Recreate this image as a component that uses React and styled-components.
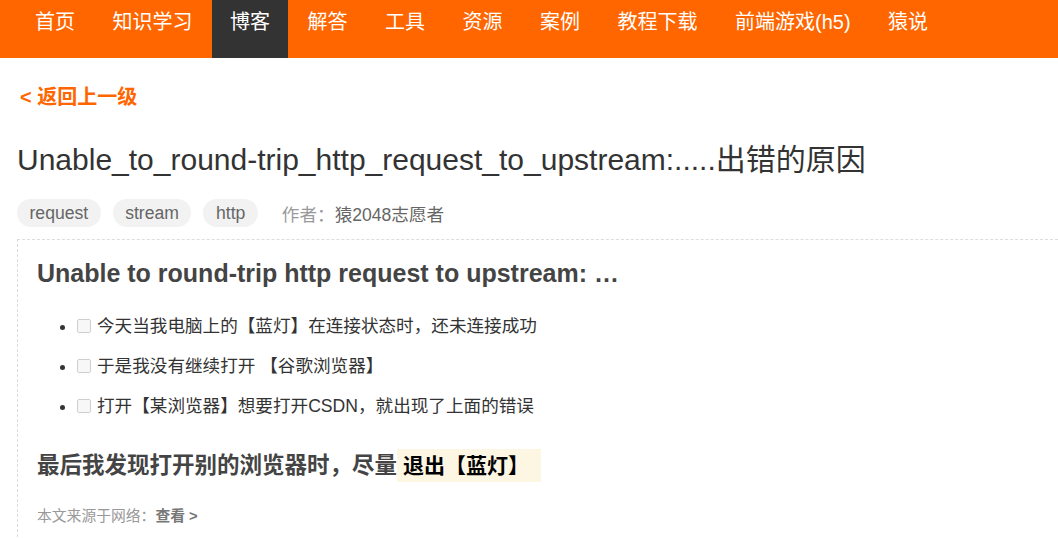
import React from 'react'
import styled, { createGlobalStyle } from 'styled-components'

const GlobalStyle = createGlobalStyle`
  body {
    margin: 0;
    background: #fff;
    overflow-x: hidden;
    font-family: "Liberation Sans", Arial, "Noto Sans CJK SC", sans-serif;
  }
`

const NAV_ITEMS = ['首页', '知识学习', '博客', '解答', '工具', '资源', '案例', '教程下载', '前端游戏(h5)', '猿说']

const TAGS = ['request', 'stream', 'http']

const ITEMS = [
  '今天当我电脑上的【蓝灯】在连接状态时，还未连接成功',
  '于是我没有继续打开 【谷歌浏览器】',
  '打开【某浏览器】想要打开CSDN，就出现了上面的错误',
]

const Nav = styled.nav`
  display: flex;
  height: 58px;
  padding-left: 17px;
  gap: 1.5px;
  background: #ff6600;
`

const NavItem = styled.a`
  display: block;
  padding: 0 18px;
  line-height: 45px;
  font-size: 20px;
  color: #fff;
  text-decoration: none;
  background: ${p => (p.$active ? '#333' : 'transparent')};
`

const Main = styled.main`
  padding-left: 17px;
`

const BackLink = styled.a`
  display: block;
  margin-top: 27px;
  padding-left: 3px;
  line-height: 24px;
  font-size: 20px;
  font-weight: bold;
  color: #ff6600;
  text-decoration: none;
`

const Title = styled.h1`
  margin: 31px 0 0;
  line-height: 40px;
  font-size: 30px;
  font-weight: normal;
  color: #333;
`

const Meta = styled.div`
  display: flex;
  align-items: center;
  gap: 12px;
  margin-top: 19px;
  height: 28px;
`

const Tag = styled.span`
  height: 28px;
  padding: 0 12.5px;
  border-radius: 14px;
  background: #f2f2f2;
  line-height: 28px;
  font-size: 17.6px;
  color: #666;
`

const Author = styled.span`
  margin-left: 12px;
  font-size: 17.6px;
  color: #999;

  b {
    font-weight: normal;
    color: #666;
  }
`

const Card = styled.article`
  margin: 12px -30px 0 0;
  padding: 18px 19px 40px;
  border: 1px dashed #ddd;
`

const CardHeading = styled.h2`
  margin: 0;
  line-height: 31px;
  font-size: 25px;
  font-weight: bold;
  color: #444;
`

const List = styled.ul`
  margin: 17px 0 0;
  padding-left: 40px;
`

const Item = styled.li`
  display: list-item;
  line-height: 40px;
  font-size: 17.6px;
  color: #333;
`

const Check = styled.span`
  display: inline-block;
  box-sizing: border-box;
  width: 14px;
  height: 14px;
  margin-right: 6px;
  vertical-align: -1px;
  border: 1px solid #cfcfcf;
  border-radius: 2px;
  background: #f7f7f7;
`

const Conclusion = styled.h3`
  margin: 23px 0 0;
  line-height: 34px;
  font-size: 22.5px;
  font-weight: bold;
  color: #444;
`

const Mark = styled.span`
  display: inline-block;
  padding: 0 12px 0 6px;
  line-height: 33px;
  font-size: 21px;
  background: #fdf6e3;
  color: #000;
`

const Source = styled.p`
  margin: 23px 0 0;
  line-height: 20px;
  font-size: 14.8px;
  color: #999;

  a {
    font-weight: bold;
    color: #777;
    text-decoration: none;
  }
`

export default function App() {
  return (
    <>
      <GlobalStyle />
      <Nav>
        {NAV_ITEMS.map(item => (
          <NavItem key={item} href="#" $active={item === '博客'}>{item}</NavItem>
        ))}
      </Nav>
      <Main>
        <BackLink href="#">&lt; 返回上一级</BackLink>
        <Title>Unable_to_round-trip_http_request_to_upstream:.....出错的原因</Title>
        <Meta>
          {TAGS.map(tag => <Tag key={tag}>{tag}</Tag>)}
          <Author>作者：<b>猿2048志愿者</b></Author>
        </Meta>
        <Card>
          <CardHeading>Unable to round-trip http request to upstream: …</CardHeading>
          <List>
            {ITEMS.map(text => (
              <Item key={text}><Check />{text}</Item>
            ))}
          </List>
          <Conclusion>最后我发现打开别的浏览器时，尽量<Mark>退出【蓝灯】</Mark></Conclusion>
          <Source>本文来源于网络：<a href="#">查看 &gt;</a></Source>
        </Card>
      </Main>
    </>
  )
}
